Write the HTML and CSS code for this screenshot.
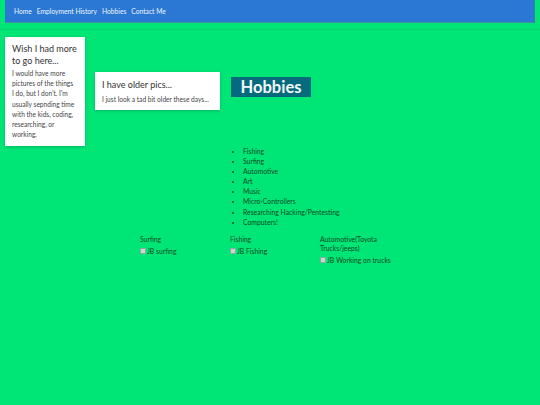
FILE: index.html
```html
<!DOCTYPE html>
<html lang="en">
<head>
    <meta charset="UTF-8">
    <meta name="viewport" content="width=device-width, initial-scale=1.0">
    <title>Hobbies</title>
    <link rel="stylesheet" href="styles.css">
</head>
<body>
    <nav class="navbar">
        <a href="#">Home</a>
        <a href="#">Employment History</a>
        <a href="#">Hobbies</a>
        <a href="#">Contact Me</a>
    </nav>
    <hr class="rule">

    <div class="top-row">
        <div class="card card-wish">
            <h3>Wish I had more to go here...</h3>
            <p>I would have more<br>pictures of the things<br>I do, but I don't. I'm<br>usually sepnding time<br>with the kids, coding,<br>researching, or<br>working.</p>
        </div>
        <div class="card card-older">
            <h3>I have older pics...</h3>
            <p>I just look a tad bit older these days...</p>
        </div>
        <h1 class="title">Hobbies</h1>
    </div>

    <ul class="hobby-list">
        <li>Fishing</li>
        <li>Surfing</li>
        <li>Automotive</li>
        <li>Art</li>
        <li>Music</li>
        <li>Micro-Controllers</li>
        <li>Researching Hacking/Pentesting</li>
        <li>Computers!</li>
    </ul>

    <div class="gallery">
        <div class="pic">
            <p>Surfing</p>
            <span class="broken"><i class="icon"></i>JB surfing</span>
        </div>
        <div class="pic">
            <p>Fishing</p>
            <span class="broken"><i class="icon"></i>JB Fishing</span>
        </div>
        <div class="pic">
            <p>Automotive(Toyota Trucks/jeeps)</p>
            <span class="broken"><i class="icon"></i>JB Working on trucks</span>
        </div>
    </div>
</body>
</html>
```

FILE: styles.css
```css
body {
    margin: 0;
    background: #00e676;
    font-family: Lato, 'Liberation Sans', sans-serif;
    color: #333;
}
.navbar {
    margin: 0 5px;
    height: 23px;
    background: #2a78d3;
    border-right: 1px solid #3d7fa8;
    border-bottom: 1px solid #3d8fa0;
    display: flex;
    align-items: center;
    gap: 5px;
    padding-left: 9px;
    box-sizing: border-box;
}
.navbar a {
    color: #eef3fd;
    text-decoration: none;
    font-size: 6.7px;
}
.rule {
    margin: 6px 0 0;
    border: none;
    border-top: 1px solid #0bd36b;
}
.top-row {
    display: flex;
    align-items: flex-start;
    padding-left: 5px;
    margin-top: 7px;
}
.card {
    background: #fff;
    box-shadow: 0 1px 3px rgba(0,0,0,0.2);
    padding: 6px 2px 6px 7px;
    box-sizing: border-box;
}
.card h3 {
    margin: 0 0 1px;
    font-size: 9px;
    font-weight: normal;
    line-height: 12px;
    color: #333;
}
.card p {
    margin: 0;
    font-size: 6.6px;
    line-height: 10.2px;
    color: #444;
    white-space: nowrap;
}
.card-wish {
    width: 80px;
    height: 109px;
}
.card-older {
    width: 125px;
    margin: 35px 0 0 10px;
    padding-top: 7px;
    height: 38px;
}
.card-older h3 {
    margin-bottom: 3px;
}
.title {
    margin: 40px 0 0 11px;
    background: #046b7d;
    color: #f4fafa;
    font-size: 16.5px;
    font-weight: bold;
    line-height: 20px;
    width: 80px;
    text-align: center;
}
.hobby-list {
    margin: 0 0 0 232px;
    padding: 0 0 0 11px;
    font-size: 6.8px;
    line-height: 10.1px;
    color: #074a22;
}
.gallery {
    display: flex;
    margin: 8px 0 0 140px;
}
.pic {
    width: 90px;
    font-size: 6.8px;
    color: #074a22;
}
.pic p {
    margin: 0 0 3px;
    line-height: 9px;
    width: 75px;
}
.broken {
    display: flex;
    align-items: center;
    line-height: 9px;
}
.icon {
    display: inline-block;
    width: 6px;
    height: 6px;
    margin-right: 1px;
    background: #c9d9c9;
    border: 1px solid #8aa;
    box-sizing: border-box;
}
```
